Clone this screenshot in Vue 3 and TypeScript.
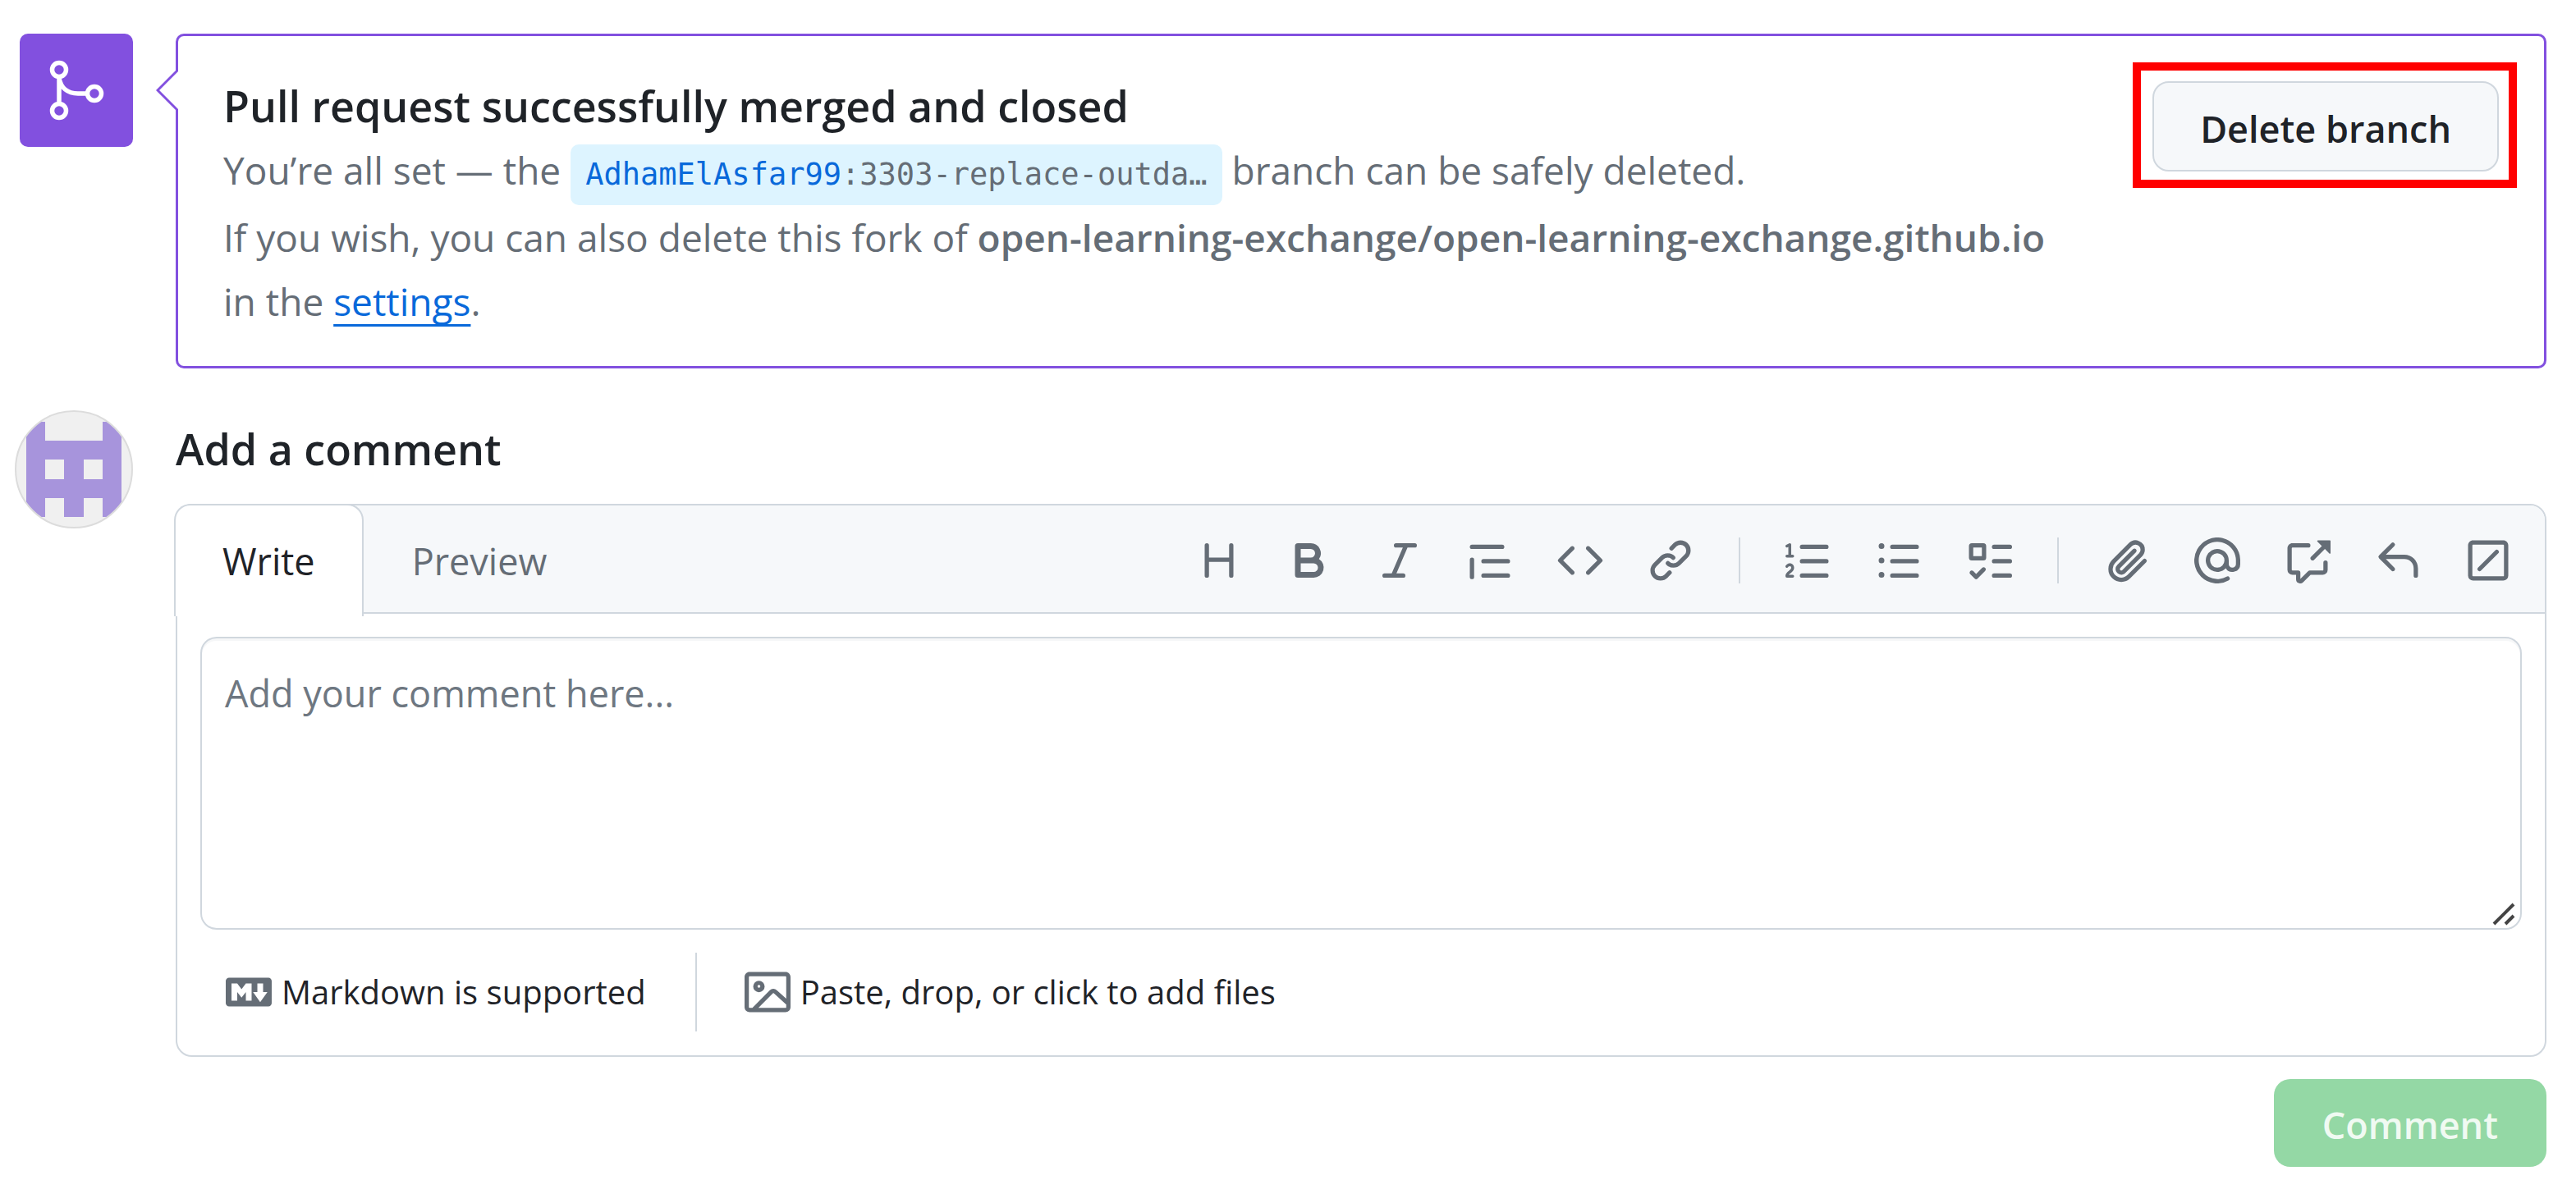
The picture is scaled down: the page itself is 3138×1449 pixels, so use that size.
<script setup lang="ts">
import { ref } from 'vue'

interface Tool {
  label: string
  path: string
}

const comment = ref('')

const toolGroups: Tool[][] = [
  [
    { label: 'Heading', path: 'M3.75 2a.75.75 0 0 1 .75.75V7h7V2.75a.75.75 0 0 1 1.5 0v10.5a.75.75 0 0 1-1.5 0V8.5h-7v4.75a.75.75 0 0 1-1.5 0V2.75A.75.75 0 0 1 3.75 2Z' },
    { label: 'Bold', path: 'M4 2h4.5a3.501 3.501 0 0 1 2.852 5.53A3.499 3.499 0 0 1 9.5 14H4a1 1 0 0 1-1-1V3a1 1 0 0 1 1-1Zm1 7v3h4.5a1.5 1.5 0 0 0 0-3Zm3.5-2a1.5 1.5 0 0 0 0-3H5v3Z' },
    { label: 'Italic', path: 'M6 2.75A.75.75 0 0 1 6.75 2h6.5a.75.75 0 0 1 0 1.5h-2.505l-3.858 9H9.25a.75.75 0 0 1 0 1.5h-6.5a.75.75 0 0 1 0-1.5h2.505l3.858-9H6.75A.75.75 0 0 1 6 2.75Z' },
    { label: 'Quote', path: 'M1.75 2.5h10.5a.75.75 0 0 1 0 1.5H1.75a.75.75 0 0 1 0-1.5Zm4 5h8.5a.75.75 0 0 1 0 1.5h-8.5a.75.75 0 0 1 0-1.5Zm0 5h8.5a.75.75 0 0 1 0 1.5h-8.5a.75.75 0 0 1 0-1.5ZM2.5 7.75v6a.75.75 0 0 1-1.5 0v-6a.75.75 0 0 1 1.5 0Z' },
    { label: 'Code', path: 'm11.28 3.22 4.25 4.25a.75.75 0 0 1 0 1.06l-4.25 4.25a.749.749 0 0 1-1.275-.326.749.749 0 0 1 .215-.734L13.94 8l-3.72-3.72a.749.749 0 0 1 .326-1.275.749.749 0 0 1 .734.215Zm-6.56 0a.751.751 0 0 1 1.042.018.751.751 0 0 1 .018 1.042L2.06 8l3.72 3.72a.749.749 0 0 1-.326 1.275.749.749 0 0 1-.734-.215L.47 8.53a.75.75 0 0 1 0-1.06Z' },
    { label: 'Link', path: 'm7.775 3.275 1.25-1.25a3.5 3.5 0 1 1 4.95 4.95l-2.5 2.5a3.5 3.5 0 0 1-4.95 0 .751.751 0 0 1 .018-1.042.751.751 0 0 1 1.042-.018 1.998 1.998 0 0 0 2.83 0l2.5-2.5a2.002 2.002 0 0 0-2.83-2.83l-1.25 1.25a.751.751 0 0 1-1.042-.018.751.751 0 0 1-.018-1.042Zm-4.69 9.64a1.998 1.998 0 0 0 2.83 0l1.25-1.25a.751.751 0 0 1 1.042.018.751.751 0 0 1 .018 1.042l-1.25 1.25a3.5 3.5 0 1 1-4.95-4.95l2.5-2.5a3.5 3.5 0 0 1 4.95 0 .751.751 0 0 1-.018 1.042.751.751 0 0 1-1.042.018 1.998 1.998 0 0 0-2.83 0l-2.5 2.5a1.998 1.998 0 0 0 0 2.83Z' },
  ],
  [
    { label: 'Numbered list', path: 'M5 3.25a.75.75 0 0 1 .75-.75h8.5a.75.75 0 0 1 0 1.5h-8.5A.75.75 0 0 1 5 3.25Zm0 5a.75.75 0 0 1 .75-.75h8.5a.75.75 0 0 1 0 1.5h-8.5A.75.75 0 0 1 5 8.25Zm0 5a.75.75 0 0 1 .75-.75h8.5a.75.75 0 0 1 0 1.5h-8.5a.75.75 0 0 1-.75-.75ZM.924 10.32a.5.5 0 0 1-.851-.525l.001-.001.001-.002.002-.004.007-.011c.097-.144.215-.273.348-.384.228-.19.588-.392 1.068-.392.468 0 .858.181 1.126.484.259.294.377.673.377 1.038 0 .987-.686 1.495-1.156 1.845l-.047.035c-.303.225-.522.4-.654.597h1.357a.5.5 0 0 1 0 1H.5a.5.5 0 0 1-.5-.5c0-1.005.692-1.52 1.167-1.875l.035-.025c.531-.396.8-.625.8-1.078a.57.57 0 0 0-.128-.376C1.806 10.068 1.695 10 1.5 10a.658.658 0 0 0-.429.163.835.835 0 0 0-.144.153ZM2.003 2.5V6h.503a.5.5 0 0 1 0 1H.5a.5.5 0 0 1 0-1h.503V3.308l-.28.14a.5.5 0 0 1-.446-.895l1.003-.5a.5.5 0 0 1 .723.447Z' },
    { label: 'Unordered list', path: 'M5.75 2.5h8.5a.75.75 0 0 1 0 1.5h-8.5a.75.75 0 0 1 0-1.5Zm0 5h8.5a.75.75 0 0 1 0 1.5h-8.5a.75.75 0 0 1 0-1.5Zm0 5h8.5a.75.75 0 0 1 0 1.5h-8.5a.75.75 0 0 1 0-1.5ZM2 14a1 1 0 1 1 0-2 1 1 0 0 1 0 2Zm1-6a1 1 0 1 1-2 0 1 1 0 0 1 2 0ZM2 4a1 1 0 1 1 0-2 1 1 0 0 1 0 2Z' },
    { label: 'Task list', path: 'M2 2h4a1 1 0 0 1 1 1v4a1 1 0 0 1-1 1H2a1 1 0 0 1-1-1V3a1 1 0 0 1 1-1Zm4.655 8.595a.75.75 0 0 1 0 1.06L4.03 14.28a.75.75 0 0 1-1.06 0l-1.5-1.5a.749.749 0 0 1 .326-1.275.749.749 0 0 1 .734.215l.97.97 2.095-2.095a.75.75 0 0 1 1.06 0ZM9.75 2.5h5.5a.75.75 0 0 1 0 1.5h-5.5a.75.75 0 0 1 0-1.5Zm0 5h5.5a.75.75 0 0 1 0 1.5h-5.5a.75.75 0 0 1 0-1.5Zm0 5h5.5a.75.75 0 0 1 0 1.5h-5.5a.75.75 0 0 1 0-1.5Zm-7.25-9v3h3v-3Z' },
  ],
  [
    { label: 'Attach files', path: 'M12.212 3.02a1.753 1.753 0 0 0-2.478.003l-5.83 5.83a3.007 3.007 0 0 0-.88 2.127c0 .795.315 1.551.88 2.116.567.567 1.333.89 2.126.89.79 0 1.548-.321 2.116-.89l5.48-5.48a.75.75 0 0 1 1.061 1.06l-5.48 5.48a4.492 4.492 0 0 1-3.177 1.33c-1.2 0-2.345-.487-3.187-1.33a4.483 4.483 0 0 1-1.32-3.177c0-1.195.475-2.341 1.32-3.186l5.83-5.83a3.25 3.25 0 0 1 5.553 2.297c0 .863-.343 1.691-.953 2.301L7.439 12.39c-.375.377-.884.59-1.416.593a1.998 1.998 0 0 1-1.412-.593 1.992 1.992 0 0 1 0-2.828l5.48-5.48a.751.751 0 0 1 1.042.018.751.751 0 0 1 .018 1.042l-5.48 5.48a.492.492 0 0 0 0 .707.499.499 0 0 0 .352.154.51.51 0 0 0 .356-.154l5.833-5.827a1.755 1.755 0 0 0 0-2.481Z' },
    { label: 'Mention', path: 'M4.75 2.37a6.501 6.501 0 0 0 6.5 11.26.75.75 0 0 1 .75 1.298A7.999 7.999 0 0 1 .989 4.148 8 8 0 0 1 16 7.75v1.5a2.75 2.75 0 0 1-5.072 1.475 3.999 3.999 0 0 1-6.65-4.19A4 4 0 0 1 12 8v1.25a1.25 1.25 0 0 0 2.5 0V7.867a6.5 6.5 0 0 0-9.75-5.496ZM10.5 8a2.5 2.5 0 1 0-5 0 2.5 2.5 0 0 0 5 0Z' },
    { label: 'Reference', path: 'M2.75 3.5a.25.25 0 0 0-.25.25v7.5c0 .138.112.25.25.25h2a.75.75 0 0 1 .75.75v2.19l2.72-2.72a.749.749 0 0 1 .53-.22h4.5a.25.25 0 0 0 .25-.25v-2.5a.75.75 0 0 1 1.5 0v2.5A1.75 1.75 0 0 1 13.25 13H9.06l-2.573 2.573A1.458 1.458 0 0 1 4 14.543V13H2.75A1.75 1.75 0 0 1 1 11.25v-7.5C1 2.784 1.784 2 2.75 2h5.5a.75.75 0 0 1 0 1.5ZM16 1.25v4.146a.25.25 0 0 1-.427.177L14.03 4.03l-3.75 3.75a.749.749 0 0 1-1.275-.326.749.749 0 0 1 .215-.734l3.75-3.75-1.543-1.543A.25.25 0 0 1 11.604 1h4.146a.25.25 0 0 1 .25.25Z' },
    { label: 'Saved replies', path: 'M6.78 1.97a.75.75 0 0 1 0 1.06L3.81 6h6.44A4.75 4.75 0 0 1 15 10.75v2.5a.75.75 0 0 1-1.5 0v-2.5a3.25 3.25 0 0 0-3.25-3.25H3.81l2.97 2.97a.749.749 0 0 1-.326 1.275.749.749 0 0 1-.734-.215L1.47 7.28a.75.75 0 0 1 0-1.06l4.25-4.25a.75.75 0 0 1 1.06 0Z' },
    { label: 'Slash commands', path: 'M13.25 1c.966 0 1.75.784 1.75 1.75v10.5A1.75 1.75 0 0 1 13.25 15H2.75A1.75 1.75 0 0 1 1 13.25V2.75C1 1.784 1.784 1 2.75 1ZM2.75 2.5a.25.25 0 0 0-.25.25v10.5c0 .138.112.25.25.25h10.5a.25.25 0 0 0 .25-.25V2.75a.25.25 0 0 0-.25-.25Zm8.78 3.03-6 6a.75.75 0 0 1-1.06-1.06l6-6a.75.75 0 0 1 1.06 1.06Z' },
  ],
]
</script>

<template>
  <main class="page">
    <div class="merge-badge">
      <svg viewBox="0 0 138 138" fill="none" stroke="#fff" stroke-width="5.5" aria-hidden="true">
        <circle cx="48" cy="44" r="8.5" />
        <circle cx="48" cy="94" r="8.5" />
        <circle cx="91" cy="73" r="8.5" />
        <path d="M48 53v32M48 54c2 12 10 19 23 19h11" />
      </svg>
    </div>

    <section class="merge-panel">
      <svg class="pointer" viewBox="0 0 27 54" aria-hidden="true">
        <path d="M27 2 2 27l25 25" fill="#fff" stroke="#8250df" stroke-width="3" />
      </svg>
      <div class="merge-text">
        <h2>Pull request successfully merged and closed</h2>
        <p>
          You’re all set — the
          <span class="branch"><a href="#">AdhamElAsfar99</a>:3303-replace-outda…</span>
          branch can be safely deleted.
        </p>
        <p>
          If you wish, you can also delete this fork of
          <strong>open-learning-exchange/open-learning-exchange.github.io</strong>
          in the <a class="settings" href="#">settings</a>.
        </p>
      </div>
      <div class="delete-wrap">
        <button type="button" class="btn delete">Delete branch</button>
      </div>
    </section>

    <svg class="avatar" viewBox="0 0 144 144" aria-hidden="true">
      <clipPath id="avatar-clip"><circle cx="72" cy="72" r="71" /></clipPath>
      <circle cx="72" cy="72" r="71" fill="#f0f0f0" />
      <path
        clip-path="url(#avatar-clip)"
        fill="#a794dc"
        fill-rule="evenodd"
        d="M14 14h23v23h70V14h23v116h-23v-23H84v23H60v-23H37v23H14ZM37 60v24h23V60ZM84 60v24h23V60Z"
      />
      <circle cx="72" cy="72" r="71" fill="none" stroke="#dcdcdc" stroke-width="2" />
    </svg>

    <form class="comment-form" @submit.prevent>
      <h2><label for="comment">Add a comment</label></h2>

      <div class="editor">
        <div class="editor-head">
          <div class="tabs" role="tablist">
            <button type="button" role="tab" class="tab active" aria-selected="true">Write</button>
            <button type="button" role="tab" class="tab" aria-selected="false">Preview</button>
          </div>
          <div class="toolbar">
            <div v-for="(group, i) in toolGroups" :key="i" class="tool-group">
              <button v-for="tool in group" :key="tool.label" type="button" class="tool" :aria-label="tool.label">
                <svg viewBox="0 0 16 16" aria-hidden="true"><path :d="tool.path" /></svg>
              </button>
            </div>
          </div>
        </div>

        <div class="field">
          <textarea id="comment" v-model="comment" placeholder="Add your comment here..."></textarea>
          <svg class="grip" viewBox="0 0 28 28" aria-hidden="true">
            <path d="M2 26 26 2M16 26 26 16" fill="none" stroke="#444" stroke-width="4" />
          </svg>
        </div>

        <div class="editor-foot">
          <a class="hint" href="#">
            <svg viewBox="0 0 16 16" aria-hidden="true">
              <path d="M14.85 3c.63 0 1.15.52 1.14 1.15v7.7c0 .63-.51 1.15-1.15 1.15H1.15C.52 13 0 12.48 0 11.84V4.15C0 3.52.52 3 1.15 3ZM9 11V5H7L5.5 7 4 5H2v6h2V8l1.5 1.92L7 8v3Zm2.99.5L14.5 8H13V5h-2v3H9.5Z" />
            </svg>
            <span>Markdown is supported</span>
          </a>
          <button type="button" class="hint">
            <svg viewBox="0 0 16 16" aria-hidden="true">
              <path d="M16 13.25A1.75 1.75 0 0 1 14.25 15H1.75A1.75 1.75 0 0 1 0 13.25V2.75C0 1.784.784 1 1.75 1h12.5c.966 0 1.75.784 1.75 1.75ZM1.75 2.5a.25.25 0 0 0-.25.25v10.5c0 .138.112.25.25.25h.94l.03-.03 6.077-6.078a1.75 1.75 0 0 1 2.412-.06L14.5 10.31V2.75a.25.25 0 0 0-.25-.25Zm12.5 11a.25.25 0 0 0 .25-.25v-.917l-4.298-3.889a.25.25 0 0 0-.344.009L4.81 13.5ZM7 6a2 2 0 1 1-3.999.001A2 2 0 0 1 7 6ZM5.5 6a.5.5 0 1 0-1 0 .5.5 0 0 0 1 0Z" />
            </svg>
            <span>Paste, drop, or click to add files</span>
          </button>
        </div>
      </div>

      <button type="submit" class="btn submit" disabled>Comment</button>
    </form>
  </main>
</template>

<style>
body {
  background: #fff;
}
</style>

<style scoped>
* {
  box-sizing: border-box;
}

.page {
  display: grid;
  grid-template-columns: 144px minmax(0, 1fr);
  column-gap: 52px;
  align-items: start;
  padding: 41px 36px 28px 18px;
  font-family: "Open Sans", "Noto Sans", sans-serif;
  font-size: 45px;
  line-height: 78px;
  color: #1f2328;
}

h2,
p {
  margin: 0;
}

h2 {
  font-size: 52px;
  font-weight: 600;
}

a {
  color: #0969da;
  text-decoration: none;
}

button {
  margin: 0;
  padding: 0;
  border: 0;
  background: none;
  font: inherit;
  color: inherit;
}

.merge-badge {
  justify-self: end;
  width: 138px;
  height: 138px;
  border-radius: 10px;
  background: #8250df;
}

.merge-badge svg {
  display: block;
}

.merge-panel {
  position: relative;
  display: flex;
  align-items: flex-start;
  justify-content: space-between;
  padding: 46px 55px 40px;
  border: 3px solid #8250df;
  border-radius: 10px;
}

.pointer {
  position: absolute;
  top: 39px;
  left: -27px;
  width: 27px;
  height: 54px;
}

.merge-text {
  flex: 1;
  margin-right: 124px;
}

.merge-text p {
  font-size: 46px;
  color: #656d76;
}

.branch {
  display: inline-block;
  padding: 0 18px;
  border-radius: 10px;
  background: #ddf4ff;
  font-family: "DejaVu Sans Mono", monospace;
  font-size: 37px;
  line-height: 74px;
}

strong {
  font-weight: 600;
}

.settings {
  text-decoration: underline;
  text-decoration-thickness: 3px;
  text-underline-offset: 10px;
  text-decoration-skip-ink: none;
}

.btn {
  display: block;
  border-radius: 20px;
  white-space: nowrap;
  font-weight: 600;
}

.delete-wrap {
  position: relative;
  margin-top: 9px;
}

/* Red call-out frame round the button */
.delete-wrap::after {
  content: "";
  position: absolute;
  inset: -23px -22px -20px -24px;
  border: 10px solid #f00;
  pointer-events: none;
}

.delete {
  height: 110px;
  padding: 5px 56px 0;
  border: 2px solid #d0d7de;
  background: #f6f8fa;
}

.avatar {
  width: 144px;
  height: 144px;
  margin-top: 51px;
}

.comment-form {
  display: flex;
  flex-direction: column;
  margin-top: 59px;
}

.editor {
  margin-top: 28px;
  border: 2px solid #d0d7de;
  border-radius: 20px;
}

.editor-head {
  display: flex;
  justify-content: space-between;
  height: 132px;
  border-bottom: 2px solid #d0d7de;
  border-radius: 18px 18px 0 0;
  background: #f6f8fa;
}

.tabs {
  display: flex;
  align-items: flex-start;
  margin: -2px 0 -5px -4px;
}

.tab {
  height: 137px;
  padding: 2px 59px 0;
  color: #656d76;
}

.tab.active {
  padding: 0 57px;
  border: 2px solid #d0d7de;
  border-bottom: 0;
  border-radius: 20px 20px 0 0;
  background: #fff;
  color: #1f2328;
}

.toolbar {
  display: flex;
  align-items: center;
  padding: 4px 41px 0 0;
}

.tool-group {
  display: flex;
  gap: 54px;
}

.tool-group + .tool-group {
  margin-left: 55px;
  padding-left: 55px;
  border-left: 2px solid #d0d7de;
}

.tool,
.tool svg {
  display: block;
  width: 56px;
  height: 56px;
}

.tool svg,
.hint svg {
  fill: #656d76;
}

.field {
  position: relative;
  padding: 28px 28px 0;
}

textarea {
  display: block;
  width: 100%;
  height: 357px;
  padding: 28px;
  border: 2px solid #d0d7de;
  border-radius: 20px;
  outline: 0;
  background: #fff;
  box-shadow: inset 0 3px 0 rgba(208, 215, 222, 0.2);
  color: #1f2328;
  font: inherit;
  resize: none;
}

textarea::placeholder {
  color: #6e7781;
  opacity: 1;
}

.grip {
  position: absolute;
  right: 36px;
  bottom: 5px;
  width: 28px;
  height: 28px;
}

.editor-foot {
  display: flex;
  padding: 28px 59px 29px;
  font-size: 40px;
  font-weight: 500;
}

.hint {
  display: flex;
  align-items: center;
  gap: 12px;
  height: 96px;
  color: #1f2328;
}

.hint svg {
  width: 56px;
  height: 56px;
}

.hint + .hint {
  margin-left: 60px;
  padding-left: 58px;
  border-left: 2px solid #d0d7de;
}

.submit {
  align-self: flex-end;
  height: 107px;
  margin-top: 27px;
  padding: 4px 59px 0;
  background: #94d8a5;
  color: #f0faf2;
}
</style>
